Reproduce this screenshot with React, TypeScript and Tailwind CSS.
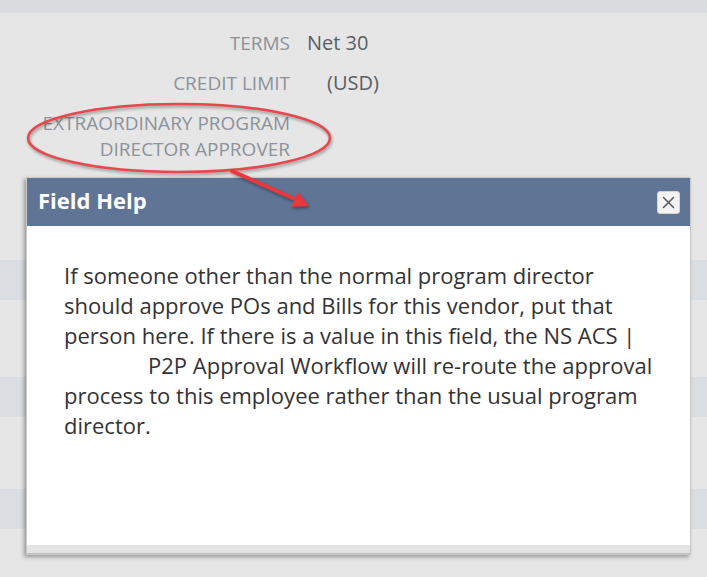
import React from "react";

// ─── Form rows behind the dialog ─────────────────────────────────────────────

function FieldRow({ label, children }: { label: React.ReactNode; children?: React.ReactNode }) {
  return (
    <div className="flex items-start gap-[17px] leading-[26px]">
      <div className="w-[290px] shrink-0 text-right text-[19px] uppercase text-[#8d929a]">{label}</div>
      <div className="text-[20px] text-[#585d64]">{children}</div>
    </div>
  );
}

function Stripe({ className = "" }: { className?: string }) {
  return <div className={`h-[40px] bg-[#dadde2] ${className}`} />;
}

// ─── Field help dialog ───────────────────────────────────────────────────────

function CloseButton() {
  return (
    <button className="flex h-[23px] w-[23px] items-center justify-center rounded-[3px] border border-[#d4d4d4] bg-[#f3f3f3]">
      <svg width="13" height="13" viewBox="0 0 13 13" fill="none" stroke="#5b5b5b" strokeWidth={1.6}>
        <path d="M1.5 1.5l10 10M11.5 1.5l-10 10" strokeLinecap="round" />
      </svg>
    </button>
  );
}

function FieldHelp() {
  return (
    <div className="absolute left-[26px] top-[177px] w-[665px] border border-[#cbcbcb] bg-white shadow-[-2px_2px_4px_rgba(0,0,0,0.35)]">
      <div className="flex h-[48px] items-center justify-between bg-[#607496] pl-[11px] pr-[10px]">
        <h2 className="pb-[4px] text-[22px] font-bold text-white">Field Help</h2>
        <CloseButton />
      </div>
      <div className="h-[319px] px-[37px] pt-[34px] text-[22px] leading-[30px] text-[#333333]">
        If someone other than the normal program director
        <br />
        should approve POs and Bills for this vendor, put that
        <br />
        person here. If there is a value in this field, the NS ACS |
        <br />
        <span className="inline-block w-[84px]" />P2P Approval Workflow will re-route the approval
        <br />
        process to this employee rather than the usual program
        <br />
        director.
      </div>
      <div className="h-[9px] border-b border-[#bdbdbd] bg-[#e4e4e4]" />
    </div>
  );
}

// ─── Annotation (red ellipse + arrow) ────────────────────────────────────────

function Annotation() {
  return (
    <svg
      className="pointer-events-none absolute inset-0"
      width="707"
      height="577"
      viewBox="0 0 707 577"
      style={{ filter: "drop-shadow(1px 2px 1.5px rgba(0,0,0,0.35))" }}
    >
      <ellipse cx="179" cy="138" rx="151" ry="34" fill="none" stroke="#e8474b" strokeWidth={2.5} />
      <line x1="232" y1="171" x2="297" y2="200" stroke="#e8383d" strokeWidth={4} strokeLinecap="round" />
      <polygon points="309,206 291,207 298,192" fill="#e8383d" />
    </svg>
  );
}

export default function App() {
  return (
    <div className="relative h-[577px] w-[707px] overflow-hidden bg-[#e6e6e6] font-['Open_Sans',sans-serif]">
      <div className="h-[13px] bg-[#d9dbde]" />

      <div className="flex flex-col gap-[14px] pt-[17px]">
        <FieldRow label="Terms">Net 30</FieldRow>
        <FieldRow label="Credit Limit">
          <span className="ml-5">(USD)</span>
        </FieldRow>
        <FieldRow
          label={
            <>
              Extraordinary Program
              <br />
              Director Approver
            </>
          }
        />
      </div>

      <Stripe className="mt-[98px]" />
      <Stripe className="mt-[77px]" />
      <Stripe className="mt-[72px]" />

      <FieldHelp />
      <Annotation />
    </div>
  );
}
